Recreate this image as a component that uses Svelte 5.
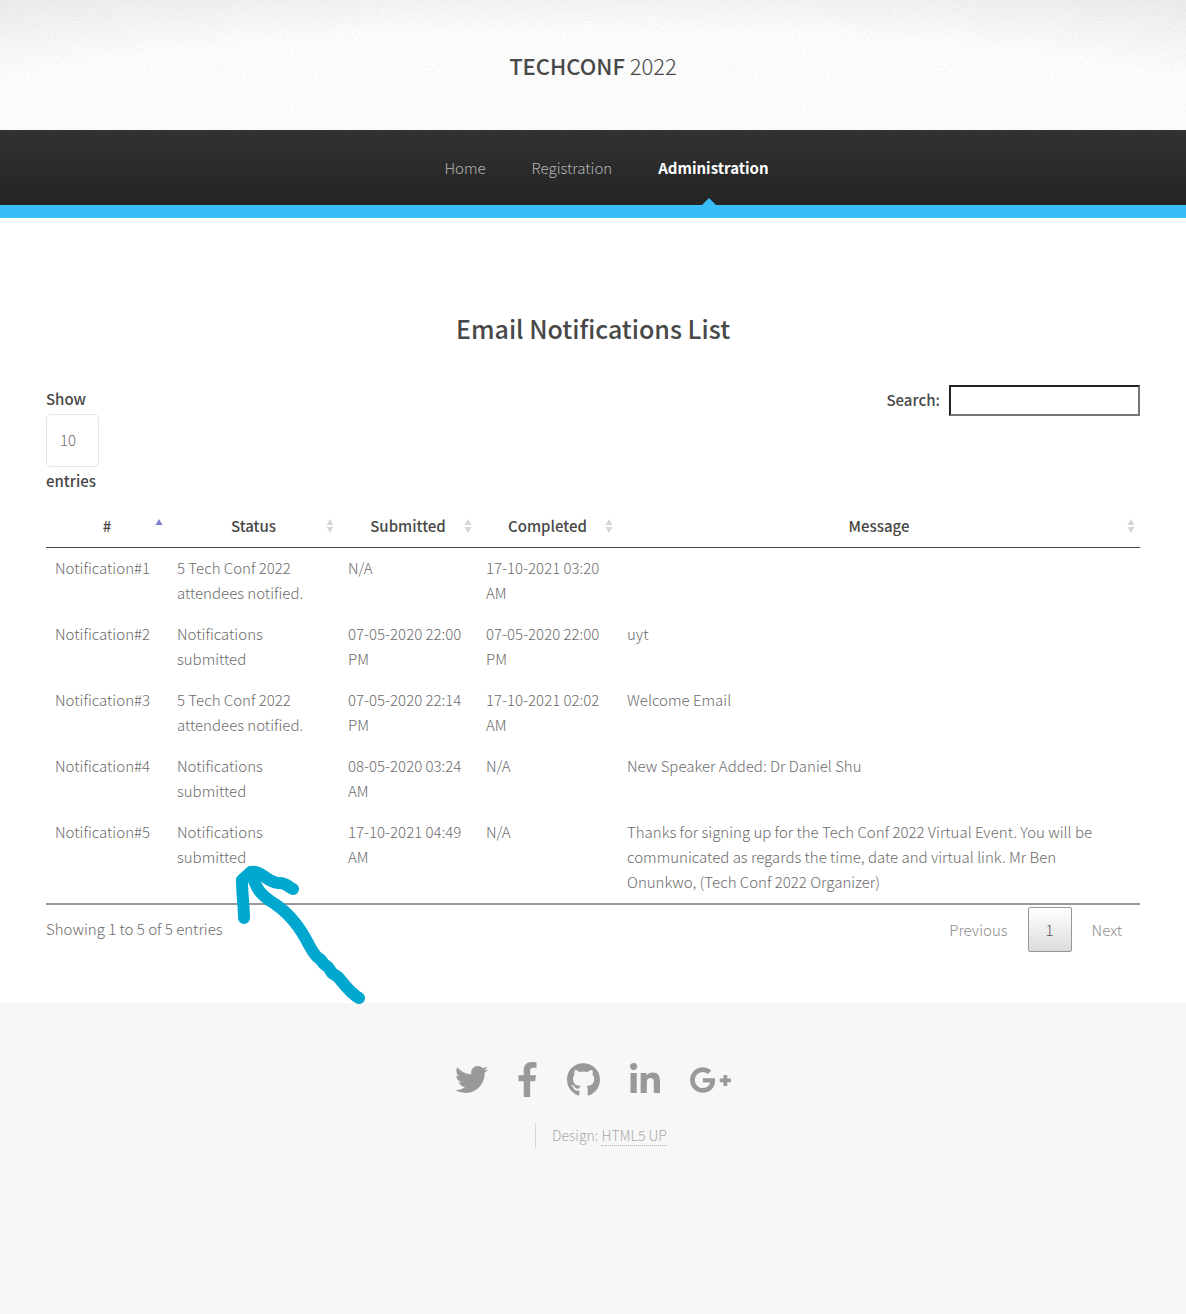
<script>
  const columns = ['#', 'Status', 'Submitted', 'Completed', 'Message'];
  const rows = [
    ['Notification#1', '5 Tech Conf 2022 attendees notified.', 'N/A', '17-10-2021 03:20 AM', ''],
    ['Notification#2', 'Notifications submitted', '07-05-2020 22:00 PM', '07-05-2020 22:00 PM', 'uyt'],
    ['Notification#3', '5 Tech Conf 2022 attendees notified.', '07-05-2020 22:14 PM', '17-10-2021 02:02 AM', 'Welcome Email'],
    ['Notification#4', 'Notifications submitted', '08-05-2020 03:24 AM', 'N/A', 'New Speaker Added: Dr Daniel Shu'],
    ['Notification#5', 'Notifications submitted', '17-10-2021 04:49 AM', 'N/A', 'Thanks for signing up for the Tech Conf 2022 Virtual Event. You will be communicated as regards the time, date and virtual link. Mr Ben Onunkwo, (Tech Conf 2022 Organizer)']
  ];
  const socials = [
    { name: 'Twitter', w: 33, h: 27, box: '0 48 512 416', d: 'M459.37 151.716c.325 4.548.325 9.097.325 13.645 0 138.72-105.583 298.558-298.558 298.558-59.452 0-114.68-17.219-161.137-47.106 8.447.974 16.568 1.299 25.34 1.299 49.055 0 94.213-16.568 130.274-44.832-46.132-.975-84.792-31.188-98.112-72.772 6.498.974 12.995 1.624 19.818 1.624 9.421 0 18.843-1.3 27.614-3.573-48.081-9.747-84.143-51.98-84.143-102.985v-1.299c13.969 7.797 30.214 12.67 47.431 13.319-28.264-18.843-46.781-51.005-46.781-87.391 0-19.492 5.197-37.36 14.294-52.954 51.655 63.675 129.3 105.258 216.365 109.807-1.624-7.797-2.599-15.918-2.599-24.04 0-57.828 46.782-104.934 104.934-104.934 30.213 0 57.502 12.67 76.67 33.137 23.715-4.548 46.456-13.32 66.599-25.34-7.798 24.366-24.366 44.833-46.132 57.827 21.117-2.273 41.584-8.122 60.426-16.243-14.292 20.791-32.161 39.308-52.628 54.253z' },
    { name: 'Facebook', w: 19, h: 35, box: '0 0 264 512', d: 'M76.7 512V283H0v-91h76.7v-71.7C76.7 42.4 124.3 0 193.8 0c33.3 0 61.9 2.5 70.2 3.6V85h-48.2c-37.8 0-45.1 18-45.1 44.3V192H256l-11.7 91h-73.6v229' },
    { name: 'GitHub', w: 33, h: 33, box: '0 4 496 496', d: 'M244.8 8C106.1 8 0 113.3 0 252c0 110.9 69.8 205.8 169.5 239.2 12.8 2.3 17.3-5.6 17.3-12.1 0-6.2-.3-40.4-.3-61.4 0 0-70 15-84.7-29.8 0 0-11.4-29.1-27.8-36.6 0 0-22.9-15.7 1.6-15.4 0 0 24.9 2 38.6 25.8 21.9 38.6 58.6 27.5 72.9 20.9 2.3-16 8.8-27.1 16-33.7-55.9-6.2-112.3-14.3-112.3-110.5 0-27.5 7.6-41.3 23.6-58.9-2.6-6.5-11.1-33.3 2.6-67.9 20.9-6.5 69 27 69 27 20-5.6 41.5-8.5 62.8-8.5s42.8 2.9 62.8 8.5c0 0 48.1-33.6 69-27 13.7 34.7 5.2 61.4 2.6 67.9 16 17.7 25.8 31.5 25.8 58.9 0 96.5-58.9 104.2-114.8 110.5 9.2 7.9 17 22.9 17 46.4 0 33.7-.3 75.4-.3 83.6 0 6.5 4.6 14.4 17.3 12.1C428.2 457.8 496 362.9 496 252 496 113.3 383.5 8 244.8 8z' },
    { name: 'LinkedIn', w: 30, h: 34, box: '0 0 448 508', d: 'M100.28 448H7.4V148.9h92.88zM53.79 108.1C24.09 108.1 0 83.5 0 53.8a53.79 53.79 0 0 1 107.58 0c0 29.7-24.1 54.3-53.79 54.3zM447.9 448h-92.68V302.4c0-34.7-.7-79.2-48.29-79.2-48.29 0-55.69 37.7-55.69 76.7V448h-92.78V148.9h89.08v40.8h1.3c12.4-23.5 42.69-48.3 87.88-48.3 94 0 111.28 61.9 111.28 142.3V448z' },
    { name: 'Google Plus', w: 41, h: 26, box: '12 64 616 384', d: 'M386.061 228.496c1.834 9.692 3.143 19.384 3.143 31.956C389.204 370.205 315.599 448 204.8 448c-106.084 0-192-85.915-192-192s85.916-192 192-192c51.864 0 95.083 18.859 128.611 50.292l-52.126 50.03c-14.145-13.621-39.028-29.599-76.485-29.599-65.484 0-118.92 54.221-118.92 121.277 0 67.056 53.436 121.277 118.92 121.277 75.961 0 104.513-54.745 108.965-82.773H204.8v-66.009h181.261zm185.406 6.437V179.2h-56.001v55.733h-55.733v56.001h55.733v55.733h56.001v-55.733H627.2v-56.001h-55.733z' }
  ];
</script>

<header class="banner">
  <svg class="grain" aria-hidden="true">
    <filter id="grain" x="0" y="0" width="100%" height="100%">
      <feTurbulence type="fractalNoise" baseFrequency="0.5" numOctaves="2" />
      <feColorMatrix values="0 0 0 0 0  0 0 0 0 0  0 0 0 0 0  2 0 0 0 -0.8" />
    </filter>
    <rect width="100%" height="100%" filter="url(#grain)" />
  </svg>
  <h1><a href="#top"><strong>TECHCONF</strong> 2022</a></h1>
</header>

<nav>
  <a href="#home">Home</a>
  <a href="#registration">Registration</a>
  <a class="current" href="#administration" aria-current="page">Administration</a>
</nav>

<main>
  <h2>Email Notifications List</h2>

  <div class="controls">
    <label class="length">
      Show
      <select><option>10</option><option>25</option><option>50</option></select>
      entries
    </label>
    <label class="search">Search: <input type="search" /></label>
  </div>

  <table>
    <colgroup><col class="c-id" /><col class="c-status" /><col class="c-sub" /><col class="c-comp" /><col /></colgroup>
    <thead>
      <tr>
        {#each columns as name, i}
          <th scope="col" aria-sort={i === 0 ? 'ascending' : undefined}>
            {name}
            <svg class="sort" class:active={i === 0} viewBox="0 0 8 14" aria-hidden="true">
              <path d="M4 0 7.5 6h-7z" />
              {#if i > 0}<path d="M4 14 .5 8h7z" />{/if}
            </svg>
          </th>
        {/each}
      </tr>
    </thead>
    <tbody>
      {#each rows as row}
        <tr>{#each row as cell}<td>{cell}</td>{/each}</tr>
      {/each}
    </tbody>
  </table>

  <div class="summary">
    <p>Showing 1 to 5 of 5 entries</p>
    <div class="pages">
      <button type="button">Previous</button>
      <button type="button" class="page">1</button>
      <button type="button">Next</button>
    </div>
  </div>

  <svg class="pointer" viewBox="220 850 160 170" aria-hidden="true">
    <path d="M244 918C244 905 242 895 242 880L251 872C262 870 266 882 278 883C286 882 288 887 293 889" />
    <path d="M251 872C256 886 257 893 275 904C290 914 301 929 309 945Q316 958 320 959L324 964L328 967L332 973L338 977C345 985 350 993 359 998" />
  </svg>
</main>

<footer>
  <ul class="social">
    {#each socials as s}
      <li>
        <a href="#social" aria-label={s.name}>
          <svg width={s.w} height={s.h} viewBox={s.box} aria-hidden="true"><path d={s.d} /></svg>
        </a>
      </li>
    {/each}
  </ul>
  <div class="credit"><p>Design: <a href="#design">HTML5 UP</a></p></div>
</footer>

<style>
  :global(body) {
    margin: 0;
    background: #f7f7f7;
    color: #6b6b6b;
    font: 300 15px/25px 'Noto Sans CJK JP', 'Noto Sans CJK SC', 'Open Sans', sans-serif;
  }
  a { color: inherit; text-decoration: none; }
  h1, h2, p, ul { margin: 0; padding: 0; }

  .banner {
    position: relative;
    padding: 47px 0;
    text-align: center;
    background: radial-gradient(ellipse 61% 81% at 50% 100%, #fdfdfd 95%, #f3f3f3 125%, #ebebeb 150%);
  }
  .grain {
    position: absolute;
    inset: 0;
    width: 100%;
    height: 100%;
    opacity: 0.04;
  }
  h1 {
    position: relative;
    font-size: 22px;
    line-height: 36px;
    font-weight: 300;
    color: #484848;
  }
  h1 strong { font-weight: 500; }

  nav {
    display: flex;
    justify-content: center;
    gap: 46px;
    padding-left: 27px;
    line-height: 75px;
    color: #b5b5b5;
    background: linear-gradient(#323232, #242424);
    border-bottom: 13px solid #37bdf8;
  }
  .current {
    position: relative;
    color: #fff;
    font-weight: 700;
  }
  .current::after {
    content: '';
    position: absolute;
    left: calc(50% - 11px);
    bottom: 0;
    border: 7px solid transparent;
    border-top: 0;
    border-bottom-color: #37bdf8;
  }

  main {
    position: relative;
    padding: 89px 46px 51px;
    background: #fff;
  }
  h2 {
    font-size: 25px;
    line-height: 42px;
    font-weight: 500;
    text-align: center;
    color: #484848;
  }
  .controls {
    display: flex;
    justify-content: space-between;
    align-items: flex-start;
    padding-top: 36px;
  }
  label { color: #484848; font-weight: 500; }
  .length { display: flex; flex-direction: column; padding-top: 1px; }
  select {
    appearance: none;
    box-sizing: border-box;
    width: 53px;
    height: 53px;
    margin: 3px 0 1px;
    padding: 0 13px 2px;
    border: 1px solid #e4e4e4;
    border-radius: 5px;
    background: #fff;
    color: #6b6b6b;
    font: inherit;
    font-weight: 300;
  }
  .search { display: flex; align-items: flex-start; gap: 9px; line-height: 29px; }
  .search input {
    box-sizing: border-box;
    width: 191px;
    height: 31px;
    border: 2px inset #767676;
    background: #fff;
    font: inherit;
  }

  table {
    width: 100%;
    margin-top: 10px;
    table-layout: fixed;
    border-collapse: separate;
    border-spacing: 0;
    border-bottom: 2px solid #999;
  }
  .c-id { width: 122px; }
  .c-status { width: 171px; }
  .c-sub { width: 138px; }
  .c-comp { width: 141px; }
  th {
    position: relative;
    padding: 10px 9px 9px;
    border-bottom: 1px solid #444;
    color: #484848;
    font-weight: 500;
  }
  td {
    padding: 7px 9px 9px;
    text-align: left;
    vertical-align: top;
  }
  td:last-child { padding-right: 18px; }
  .sort {
    position: absolute;
    right: 5px;
    top: 16px;
    width: 8px;
    height: 14px;
    fill: #d6d6d6;
  }
  .sort.active { fill: #7b7fd0; }

  .summary {
    display: flex;
    justify-content: space-between;
    align-items: flex-start;
    padding-top: 2px;
  }
  .summary p { padding-top: 9px; }
  .pages { display: flex; gap: 2px; }
  button {
    height: 45px;
    padding: 0 18px;
    border: 0;
    background: none;
    color: #8a8a8a;
    font: inherit;
  }
  .page {
    width: 44px;
    padding: 0;
    border: 1px solid #979797;
    border-radius: 2px;
    background: linear-gradient(#fff, #dcdcdc);
    color: #555;
  }
  .pointer {
    position: absolute;
    left: 220px;
    top: 632px;
    width: 160px;
    height: 170px;
    fill: none;
    stroke: #00a8cf;
    stroke-width: 12;
    stroke-linecap: round;
    stroke-linejoin: round;
  }

  footer {
    padding: 59px 0 165px;
    color: #a8a8a8;
  }
  .social {
    display: flex;
    justify-content: center;
    align-items: center;
    gap: 30px;
    list-style: none;
  }
  .social a, .social svg { display: block; }
  .social svg { fill: #999; }
  .credit {
    display: flex;
    justify-content: center;
    padding: 26px 0 0 16px;
    font-size: 14px;
  }
  .credit p {
    padding-left: 16px;
    border-left: 1px solid #d6d6d6;
  }
  .credit a { border-bottom: 1px dotted #bbb; }
</style>
